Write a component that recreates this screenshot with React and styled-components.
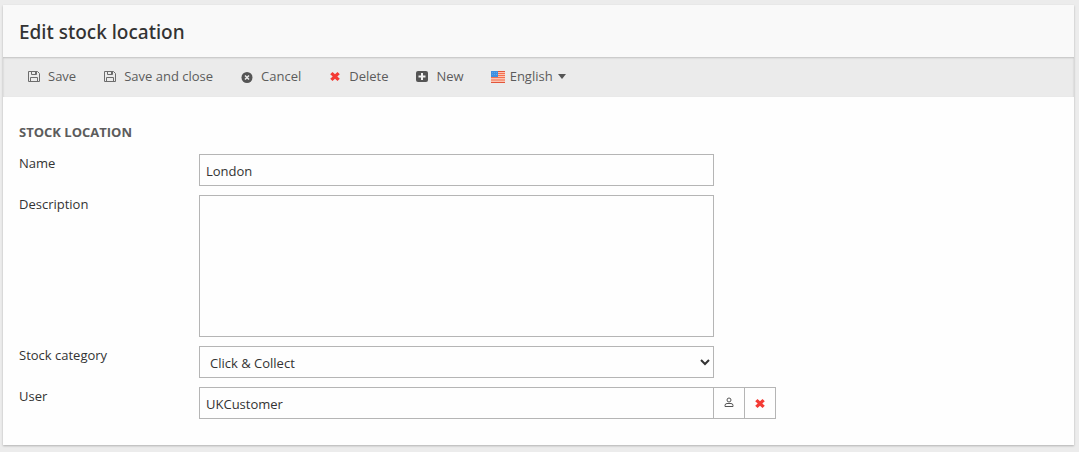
import React, { useState } from 'react';
import styled, { createGlobalStyle, css } from 'styled-components';

const GlobalStyle = createGlobalStyle`
  *, *::before, *::after {
    box-sizing: border-box;
  }

  body {
    margin: 0;
    background: #ececec;
    color: #333;
    font-family: "Segoe UI", "Open Sans", sans-serif;
    font-size: 13px;
    line-height: 18px;
  }

  button, input, select, textarea {
    font: inherit;
    color: inherit;
  }
`;

const Card = styled.main`
  margin: 5px 5px 6px 3px;
  background: #fefefe;
  box-shadow: 0 1px 2px rgba(0, 0, 0, 0.25);
`;

const Header = styled.header`
  padding: 13px 16px 11px;
  background: #f9f9f9;
`;

const Title = styled.h1`
  margin: 0;
  font-family: "Segoe UI", "Noto Sans", sans-serif;
  font-size: 19px;
  font-weight: 500;
  line-height: 28px;
`;

const Toolbar = styled.div`
  display: flex;
  flex-wrap: wrap;
  align-items: center;
  gap: 27px;
  min-height: 40px;
  padding: 0 24px 2px;
  background: #ebebeb;
  box-shadow: inset 0 1px 2px rgba(0, 0, 0, 0.18);
`;

const ToolButton = styled.button`
  display: inline-flex;
  align-items: center;
  gap: ${props => (props.$tight ? '5px' : '7px')};
  padding: 0;
  border: 0;
  background: none;
  color: #5c5c5c;
  white-space: nowrap;
  cursor: pointer;
`;

const Icon = styled.svg`
  display: block;
  flex: none;
`;

const Form = styled.form`
  padding: 26px 16px 26px;
`;

const SectionTitle = styled.h2`
  margin: 0 0 13px;
  color: #5c5c5c;
  font-size: 13px;
  font-weight: 700;
  line-height: 18px;
  text-transform: uppercase;
`;

const Fields = styled.div`
  display: grid;
  gap: 9px;
`;

const Row = styled.div`
  display: flex;
  align-items: flex-start;
`;

const Label = styled.label`
  flex: 0 0 180px;
`;

const control = css`
  flex: 0 1 515px;
  min-width: 0;
  height: 32px;
  margin: 0;
  padding: 2px 6px 0;
  border: 1px solid #b5b5b5;
  border-radius: 0;
  background: #fefefe;
`;

const Input = styled.input`
  ${control}
`;

const TextArea = styled.textarea`
  ${control}
  height: 142px;
  resize: none;
`;

const Select = styled.select`
  ${control}
`;

const IconButton = styled.button`
  display: flex;
  align-items: center;
  justify-content: center;
  flex: none;
  width: 32px;
  height: 32px;
  margin-left: -1px;
  padding: 0;
  border: 1px solid #b5b5b5;
  background: #fefefe;
  cursor: pointer;
`;

const SaveIcon = () => (
  <Icon width="14" height="14" viewBox="0 0 14 14" fill="none" stroke="#6c6c6c" aria-hidden="true">
    <path d="M1.5 2.5h9l2 2v8h-11z" />
    <path d="M4.5 2.5v3h5v-3M3.5 12.5v-4h7v4" />
    <path d="M8.5 2v3" />
  </Icon>
);

const CancelIcon = () => (
  <Icon width="14" height="14" viewBox="0 0 14 14" aria-hidden="true">
    <circle cx="7" cy="8.5" r="5.5" fill="#555" />
    <path d="M5 6.5l4 4M9 6.5l-4 4" stroke="#ebebeb" strokeWidth="1.5" />
  </Icon>
);

const DeleteIcon = () => (
  <Icon width="14" height="14" viewBox="0 0 14 14" aria-hidden="true">
    <path
      d="M4.5 3L7 5.3 9.5 3 11.8 5.2 9.3 7.5 11.8 9.8 9.5 12 7 9.7 4.5 12 2.2 9.8 4.7 7.5 2.2 5.2z"
      fill="#f43b35"
    />
  </Icon>
);

const NewIcon = () => (
  <Icon width="14" height="14" viewBox="0 0 14 14" aria-hidden="true">
    <rect x="1" y="2" width="12" height="11" rx="2" fill="#555" />
    <path d="M7 4v7M3.5 7.5h7" stroke="#f2f2f2" strokeWidth="2" />
  </Icon>
);

const FlagIcon = () => (
  <Icon width="14" height="14" viewBox="0 0 14 14" aria-hidden="true">
    <rect y="2" width="14" height="12" fill="#fbc4b3" />
    <path d="M0 2.5h14M0 13.5h14" stroke="#e2553a" />
    <path d="M0 4.5h14M0 6.5h14M0 8.5h14M0 11h14" stroke="#f4704f" />
    <rect y="2" width="7" height="6" fill="#3f8fe0" />
    <path d="M1 3.5h5M1 5.5h5" stroke="#5ba5ec" strokeDasharray="1 1" />
  </Icon>
);

const CaretIcon = () => (
  <Icon width="8" height="5" viewBox="0 0 8 5" aria-hidden="true">
    <path d="M0 0h8L4 5z" fill="#555" />
  </Icon>
);

const UserIcon = () => (
  <Icon width="14" height="14" viewBox="0 0 14 14" fill="none" stroke="#555" aria-hidden="true">
    <circle cx="7" cy="4" r="2" />
    <path d="M3 10.5V9.5Q3 7.5 5 7.5H9Q11 7.5 11 9.5V10.5z" />
  </Icon>
);

const App = () => {
  const [name, setName] = useState('London');
  const [description, setDescription] = useState('');
  const [user, setUser] = useState('UKCustomer');

  return (
    <>
      <GlobalStyle />
      <Card>
        <Header>
          <Title>Edit stock location</Title>
        </Header>
        <Toolbar role="toolbar">
          <ToolButton type="button"><SaveIcon />Save</ToolButton>
          <ToolButton type="button"><SaveIcon />Save and close</ToolButton>
          <ToolButton type="button"><CancelIcon />Cancel</ToolButton>
          <ToolButton type="button"><DeleteIcon />Delete</ToolButton>
          <ToolButton type="button"><NewIcon />New</ToolButton>
          <ToolButton type="button" aria-haspopup="menu" $tight>
            <FlagIcon />English<CaretIcon />
          </ToolButton>
        </Toolbar>
        <Form onSubmit={e => e.preventDefault()}>
          <SectionTitle>Stock location</SectionTitle>
          <Fields>
            <Row>
              <Label htmlFor="name">Name</Label>
              <Input id="name" value={name} onChange={e => setName(e.target.value)} />
            </Row>
            <Row>
              <Label htmlFor="description">Description</Label>
              <TextArea
                id="description"
                value={description}
                onChange={e => setDescription(e.target.value)}
              />
            </Row>
            <Row>
              <Label htmlFor="category">Stock category</Label>
              <Select id="category">
                <option>Click &amp; Collect</option>
              </Select>
            </Row>
            <Row>
              <Label htmlFor="user">User</Label>
              <Input id="user" value={user} onChange={e => setUser(e.target.value)} />
              <IconButton type="button" aria-label="Select user"><UserIcon /></IconButton>
              <IconButton type="button" aria-label="Remove user" onClick={() => setUser('')}>
                <DeleteIcon />
              </IconButton>
            </Row>
          </Fields>
        </Form>
      </Card>
    </>
  );
};

export default App;
